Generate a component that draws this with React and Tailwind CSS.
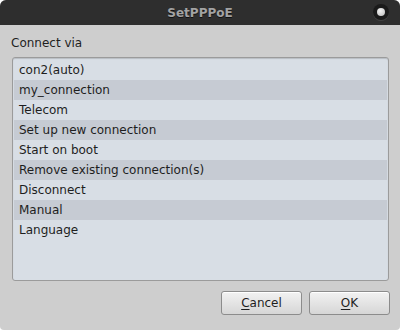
const items = [
  'con2(auto)',
  'my_connection',
  'Telecom',
  'Set up new connection',
  'Start on boot',
  'Remove existing connection(s)',
  'Disconnect',
  'Manual',
  'Language',
];

export default function App() {
  return (
    <div className="w-[400px] h-[330px] bg-white font-['DejaVu_Sans',sans-serif]">
      <div className="w-full h-full flex flex-col bg-[#cecece] rounded-t-[6px] rounded-b-[4px] overflow-hidden">
        {/* Title bar */}
        <div className="h-[25px] bg-[#2e2e2e] flex items-center justify-center relative">
          <span className="text-[12px] font-bold text-[#a3a3a3] [text-shadow:0_1px_0_#111]">SetPPPoE</span>
          <div className="absolute right-[11px] top-[4px] w-[16px] h-[16px] rounded-full bg-[#1a1a1a] shadow-[0_1px_0_#444] flex items-center justify-center">
            <div className="w-[8px] h-[8px] rounded-full bg-[radial-gradient(circle_at_40%_35%,#f4f4f4,#b8b8b8)]" />
          </div>
        </div>

        {/* Body */}
        <div className="flex-1 flex flex-col px-[12px] pt-[11px]">
          <p className="-ml-px text-[12px] leading-[15px] text-[#1f1f1f]">Connect via</p>
          <div className="mt-[6px] h-[224px] w-[377px] border border-[#9b9b9b] rounded-[3px] bg-[#d8dee5] px-px pt-[2px] shadow-[inset_0_1px_1px_rgba(0,0,0,0.15)]">
            {items.map((item, i) => (
              <div
                key={item}
                className={`h-[20px] flex items-center pl-[5px] text-[12px] text-[#1e1e1e] ${i % 2 ? 'bg-[#c6cbd3]' : 'bg-[#d8dee5]'}`}
              >
                {item}
              </div>
            ))}
          </div>

          <div className="flex justify-end gap-[7px] mt-[10px] -mr-[2px]">
            {[['C', 'ancel'], ['O', 'K']].map(([k, rest]) => (
              <button
                key={k}
                className="w-[81px] h-[24px] rounded-[3px] border border-[#8c8c8c] bg-[linear-gradient(#f2f2f2,#d6d6d6)] text-[12px] text-[#1e1e1e] shadow-[inset_0_1px_0_#fff]"
              >
                <span className="underline underline-offset-2">{k}</span>
                {rest}
              </button>
            ))}
          </div>
        </div>
      </div>
    </div>
  );
}
